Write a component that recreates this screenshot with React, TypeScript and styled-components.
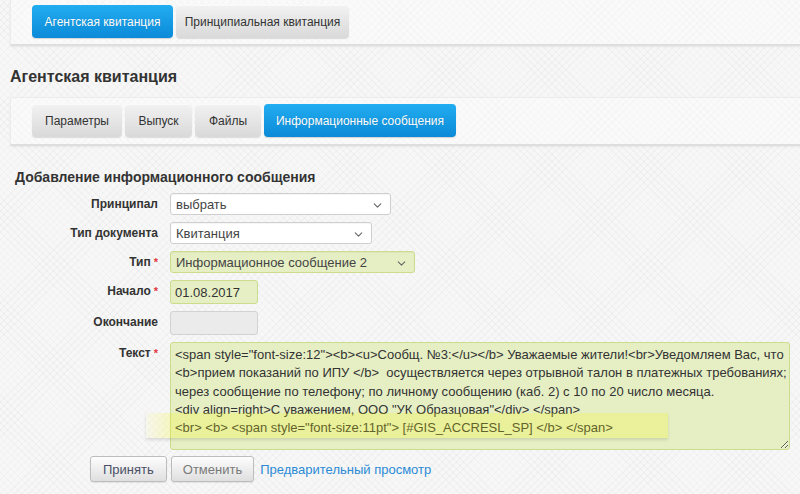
import { ReactNode } from 'react';
import styled, { createGlobalStyle } from 'styled-components';
import { ChevronDown } from 'lucide-react';

const GlobalStyle = createGlobalStyle`
    html, body {
        margin: 0;
        padding: 0;
    }

    body {
        font-family: "Liberation Sans", Arial, sans-serif;
        color: #333;
        background-color: #f7f7f7;
        background-image:
            repeating-linear-gradient(45deg, rgba(0, 0, 0, 0.025) 0 1px, transparent 1px 5px),
            repeating-linear-gradient(-45deg, rgba(0, 0, 0, 0.025) 0 1px, transparent 1px 5px);
        min-height: 494px;
        overflow: hidden;
    }
`;

const Page = styled.div`
    padding-left: 10px;
`;

const Panel = styled.div<{ $top?: boolean }>`
    display: flex;
    gap: 3px;
    padding: ${(p) => (p.$top ? '5px 0 6px 21px' : '6px 0 7px 21px')};
    background: rgba(255, 255, 255, 0.35);
    border-left: 1px solid #ececec;
    border-top: ${(p) => (p.$top ? 'none' : '1px solid #ececec')};
    border-bottom: 2px solid #dedede;
    box-shadow: 0 1px 2px rgba(0, 0, 0, 0.06);
`;

const Tab = styled.button<{ $active?: boolean; $width: number }>`
    width: ${(p) => p.$width}px;
    height: 33px;
    padding: 0;
    border: none;
    border-radius: 4px;
    font-family: "Liberation Sans", Arial, sans-serif;
    font-size: 12px;
    white-space: nowrap;
    cursor: pointer;
    color: ${(p) => (p.$active ? '#fff' : '#333')};
    background: ${(p) =>
        p.$active
            ? 'linear-gradient(#22adf0, #0b8ad8)'
            : 'linear-gradient(#f2f2f2, #d9d9d9)'};
    box-shadow: ${(p) =>
        p.$active
            ? '0 1px 1px rgba(0, 0, 0, 0.15)'
            : '0 1px 1px rgba(0, 0, 0, 0.12), inset 0 1px 0 #fafafa'};
    text-shadow: ${(p) => (p.$active ? '0 0 1px rgba(0, 0, 0, 0.2)' : 'none')};
`;

const Title = styled.h2`
    margin: 21px 0 10px;
    font-size: 16px;
    line-height: 20px;
    font-weight: bold;
    color: #333;
`;

const SectionTitle = styled.h3`
    margin: 22px 0 7px 5px;
    font-size: 14px;
    line-height: 18px;
    font-weight: bold;
    color: #333;
`;

const Form = styled.div`
    display: grid;
    grid-template-columns: 148px auto;
    column-gap: 12px;
    row-gap: 7px;
    align-items: start;
`;

const Label = styled.label`
    padding-top: 3px;
    text-align: right;
    font-size: 12px;
    line-height: 16px;
    font-weight: bold;
    color: #333;
    white-space: nowrap;
`;

const Required = styled.span`
    color: #e0393e;
    font-size: 11px;
    margin-left: 3px;
    vertical-align: top;
`;

const SelectBox = styled.div<{ $width: number; $valid?: boolean }>`
    position: relative;
    width: ${(p) => p.$width}px;
    height: 22px;
    box-sizing: border-box;
    border: 1px solid ${(p) => (p.$valid ? '#cbdc8c' : '#cfcfcf')};
    border-radius: 3px;
    background: ${(p) => (p.$valid ? '#e6efc4' : '#fff')};
    box-shadow: inset 0 1px 1px rgba(0, 0, 0, 0.04);
    display: flex;
    align-items: center;
    padding-left: 5px;
    font-size: 13px;
    color: #444;
`;

const Caret = styled(ChevronDown)`
    position: absolute;
    right: 6px;
    top: 5px;
    color: #666;
`;

const Input = styled.div<{ $valid?: boolean; $disabled?: boolean }>`
    width: 88px;
    height: 24px;
    box-sizing: border-box;
    border: 1px solid ${(p) => (p.$valid ? '#cbdc8c' : '#d2d2d2')};
    border-radius: 3px;
    background: ${(p) => (p.$valid ? '#e6efc4' : p.$disabled ? '#ebebeb' : '#fff')};
    display: flex;
    align-items: center;
    padding-left: 4px;
    font-size: 13px;
    color: #333;
`;

const TextWrap = styled.div`
    position: relative;
    width: 620px;
    height: 108px;
`;

const TextArea = styled.textarea`
    width: 100%;
    height: 100%;
    box-sizing: border-box;
    margin: 0;
    padding: 3px 4px;
    border: 1px solid #cbdc8c;
    border-radius: 3px;
    background: #e6efc4;
    font-family: "Liberation Sans", Arial, sans-serif;
    font-size: 13px;
    line-height: 18.3px;
    color: #333;
    white-space: pre;
    overflow: hidden;
    resize: both;
`;

const Highlight = styled.div`
    position: absolute;
    left: -24px;
    top: 71px;
    width: 522px;
    height: 25px;
    background: linear-gradient(90deg, rgba(248, 248, 40, 0.05), rgba(245, 245, 20, 0.24) 26px);
    box-shadow: 0 2px 3px rgba(0, 0, 0, 0.12);
    pointer-events: none;
`;

const Actions = styled.div`
    display: flex;
    align-items: center;
    gap: 4px;
    padding-left: 80px;
    margin-top: 6px;
`;

const Button = styled.button<{ $muted?: boolean }>`
    height: 26px;
    padding: 0 ${(p) => (p.$muted ? 11 : 12)}px;
    border: 1px solid #bdbdbd;
    border-radius: 3px;
    background: linear-gradient(#fdfdfd, #dfdfdf);
    box-shadow: 0 1px 1px rgba(0, 0, 0, 0.08);
    font-family: "Liberation Sans", Arial, sans-serif;
    font-size: 13px;
    color: ${(p) => (p.$muted ? '#7a7a7a' : '#4a5068')};
`;

const Link = styled.a`
    margin-left: 2px;
    font-size: 13px;
    color: #2b8ad6;
    text-decoration: none;
`;

const message = [
    '<span style="font-size:12"><b><u>Сообщ. №3:</u></b> Уважаемые жители!<br>Уведомляем Вас, что',
    '<b>прием показаний по ИПУ </b>  осуществляется через отрывной талон в платежных требованиях;',
    'через сообщение по телефону; по личному сообщению (каб. 2) с 10 по 20 число месяца.',
    '<div align=right>С уважением, ООО "УК Образцовая"</div> </span>',
    '<br> <b> <span style="font-size:11pt"> [#GIS_ACCRESL_SP] </b> </span>',
].join('\n');

function Field({ label, required, children }: { label: string; required?: boolean; children: ReactNode }) {
    return (
        <>
            <Label>
                {label}
                {required && <Required>*</Required>}
            </Label>
            <div>{children}</div>
        </>
    );
}

export default function App() {
    return (
        <Page>
            <GlobalStyle />
            <Panel $top>
                <Tab $active $width={141}>Агентская квитанция</Tab>
                <Tab $width={173}>Принципиальная квитанция</Tab>
            </Panel>

            <Title>Агентская квитанция</Title>

            <Panel>
                <Tab $width={90}>Параметры</Tab>
                <Tab $width={67}>Выпуск</Tab>
                <Tab $width={66}>Файлы</Tab>
                <Tab $active $width={192}>Информационные сообщения</Tab>
            </Panel>

            <SectionTitle>Добавление информационного сообщения</SectionTitle>

            <Form>
                <Field label="Принципал">
                    <SelectBox $width={221}>
                        выбрать
                        <Caret size={13} strokeWidth={2} />
                    </SelectBox>
                </Field>
                <Field label="Тип документа">
                    <SelectBox $width={202}>
                        Квитанция
                        <Caret size={13} strokeWidth={2} />
                    </SelectBox>
                </Field>
                <Field label="Тип" required>
                    <SelectBox $width={245} $valid>
                        Информационное сообщение 2
                        <Caret size={13} strokeWidth={2} />
                    </SelectBox>
                </Field>
                <Field label="Начало" required>
                    <Input $valid>01.08.2017</Input>
                </Field>
                <Field label="Окончание">
                    <Input $disabled />
                </Field>
                <Field label="Текст" required>
                    <TextWrap>
                        <TextArea defaultValue={message} spellCheck={false} />
                        <Highlight />
                    </TextWrap>
                </Field>
            </Form>

            <Actions>
                <Button>Принять</Button>
                <Button $muted>Отменить</Button>
                <Link href="#">Предварительный просмотр</Link>
            </Actions>
        </Page>
    );
}
